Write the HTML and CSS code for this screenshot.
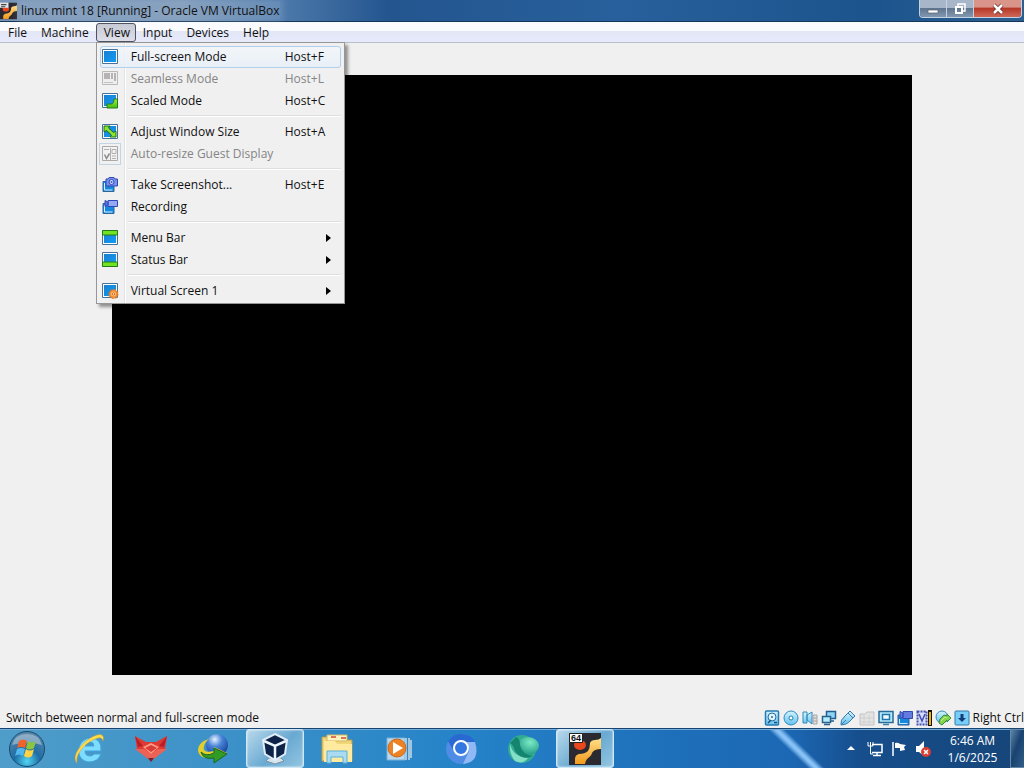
FILE: index.html
```html
<!DOCTYPE html>
<html lang="en">
<head>
<meta charset="utf-8">
<title>linux mint 18 [Running] - Oracle VM VirtualBox</title>
<link rel="stylesheet" href="styles.css">
</head>
<body>
<svg class="defs" aria-hidden="true">
  <defs>
    <linearGradient id="blue" x1="0" y1="0" x2="1" y2="1"><stop offset="0" stop-color="#1a7fd0"/><stop offset="1" stop-color="#129cf5"/></linearGradient>
    <linearGradient id="green" x1="0" y1="0" x2="0" y2="1"><stop offset="0" stop-color="#a4f03a"/><stop offset="1" stop-color="#42bd10"/></linearGradient>
    <linearGradient id="cyan" x1="0" y1="0" x2="0" y2="1"><stop offset="0" stop-color="#d4f4ff"/><stop offset="1" stop-color="#63c1f0"/></linearGradient>
    <linearGradient id="gold" x1="0" y1="0" x2="0" y2="1"><stop offset="0" stop-color="#ffe08a"/><stop offset="1" stop-color="#f39a1c"/></linearGradient>
    <radialGradient id="orb" cx=".5" cy=".85" r=".8"><stop offset="0" stop-color="#53d5f5"/><stop offset=".45" stop-color="#1d6ea6"/><stop offset="1" stop-color="#5b86a8"/></radialGradient>
    <radialGradient id="globe" cx=".4" cy=".25" r=".8"><stop offset="0" stop-color="#e4f1ff"/><stop offset=".4" stop-color="#4a86d8"/><stop offset="1" stop-color="#123d95"/></radialGradient>
    <radialGradient id="mint" cx=".6" cy=".3" r=".8"><stop offset="0" stop-color="#7cebc5"/><stop offset="1" stop-color="#148f7b"/></radialGradient>
    <symbol id="screen" viewBox="0 0 16 16"><path d="M.5.5h15v14H.5z" fill="#fff" stroke="#47739b"/><path d="M2 2h12v11H2z" fill="url(#blue)"/></symbol>
    <symbol id="vm" viewBox="0 0 32 32"><path d="M0 0h32v32H0z" fill="#2b2a31"/><path d="M6 31V26q0-4 4-5 6 0 9-3 2-3 2-8 1-3 5-3 4 0 6-2v11q-7 0-9 4c-1 5-6 4-7 11z" fill="url(#gold)"/><ellipse cx="11" cy="12" rx="6" ry="5" fill="#e9481f"/></symbol>
  </defs>
</svg>
<div class="desktop">
  <header class="titlebar">
    <svg class="title-icon" viewBox="0 0 16 16"><use href="#vm"/><path d="M0 0h8v5H0z" fill="#dfe5e9"/><path d="M1 2h5M1 4h4" stroke="#444"/></svg>
    <h1 class="title"><span class="title-glow">linux mint 18 [Running] - Oracle VM VirtualBox</span></h1>
    <div class="window-controls">
      <button class="control" aria-label="Minimize"><svg width="12" height="12" viewBox="0 0 12 12"><path d="M1 7h10v3H1z" fill="#fff" stroke="#56616e" stroke-width=".7"/></svg></button>
      <button class="control" aria-label="Restore"><svg width="12" height="12" viewBox="0 0 12 12" fill="none"><path d="M4 3V1h7v7H9" stroke="#fff" stroke-width="1.500"/><path d="M2 4h6v6H2z" stroke="#fff" stroke-width="2"/></svg></button>
      <button class="control control-close" aria-label="Close"><svg width="12" height="12" viewBox="0 0 12 12"><path d="M2 2l8 8M10 2l-8 8" stroke="#6a2b28" stroke-width="4"/><path d="M2 2l8 8M10 2l-8 8" stroke="#fff" stroke-width="2.500"/></svg></button>
    </div>
  </header>
  <nav class="menubar">
    <button class="menu-title">File</button>
    <button class="menu-title">Machine</button>
    <div class="menu-holder">
      <button class="menu-title menu-open" aria-expanded="true">View</button>
      <div class="menu" role="menu">
        <button class="item item-active" role="menuitem"><svg class="icon"><use href="#screen"/></svg><span>Full-screen Mode</span><span class="key">Host+F</span></button>
        <button class="item" role="menuitem" disabled><svg class="icon" viewBox="0 0 16 16"><path d="M.5.5h15v13H.5z" fill="#eee" stroke="#b9b9b9"/><path d="M2 2h6v6H2zM9 2h2v6H9zM12 2h2v8h-2z" fill="#b7b3b5"/><path d="M2 11.500h9" stroke="#c4c4c4"/></svg><span>Seamless Mode</span><span class="key">Host+L</span></button>
        <button class="item" role="menuitem"><svg class="icon" viewBox="0 0 16 16"><use href="#screen"/><path d="M12 6h3.500v9H5v-4h4q3 0 3-5z" fill="url(#green)" stroke="#247d1b"/></svg><span>Scaled Mode</span><span class="key">Host+C</span></button>
        <hr class="separator">
        <button class="item" role="menuitem"><svg class="icon" viewBox="0 0 16 16"><use href="#screen"/><path d="M2 2h6L6.500 4l5 4.500L14 7v6H8l1.500-2-5-4.500L2 8z" fill="#8fe32c" stroke="#176d19"/></svg><span>Adjust Window Size</span><span class="key">Host+A</span></button>
        <button class="item" role="menuitem" disabled><svg class="icon icon-checked" viewBox="0 0 16 16"><path d="M.5.5h15v14H.5z" fill="#f2f2f2" stroke="#aaa"/><path d="M8.500 2v12M10 3.500h4v4h-4zM2 3.500h5M10 10h4M10 12.500h4" fill="none" stroke="#b0b0b0"/><path d="M2.500 8.500l2 4 3-5" fill="none" stroke="#8c8c8c" stroke-width="1.500"/></svg><span>Auto-resize Guest Display</span></button>
        <hr class="separator">
        <button class="item" role="menuitem"><svg class="icon" viewBox="0 0 16 16"><path d="M1 4.500h11v10H1z" fill="#1488df" stroke="#2c659a"/><path d="M2.500 6v7h8" fill="none" stroke="#d9efff"/><path d="M4 2h2l1-1.500h5L13 2h2.500v7H4z" fill="#7690ed" stroke="#3347b5"/><circle cx="9.500" cy="5" r="2.500" fill="#cfdcff" stroke="#3448b5"/><circle cx="9.500" cy="5" r="1" fill="#4057c5"/></svg><span>Take Screenshot...</span><span class="key">Host+E</span></button>
        <button class="item" role="menuitem"><svg class="icon" viewBox="0 0 16 16"><path d="M1 4.500h11v10H1z" fill="#1488df" stroke="#2c659a"/><path d="M2.500 6v7h8" fill="none" stroke="#d9efff"/><path d="M6 1.500h9.500v6H6z" fill="#93a9f5" stroke="#3448b5"/><path d="M6 3L3 1.500v6L6 6z" fill="#5b75df" stroke="#3448b5"/></svg><span>Recording</span></button>
        <hr class="separator">
        <button class="item" role="menuitem"><svg class="icon" viewBox="0 0 16 16"><use href="#screen"/><path d="M.5.5h15V5H.5z" fill="#72e222" stroke="#247d1b"/></svg><span>Menu Bar</span><svg class="arrow" viewBox="0 0 5 8"><path d="M0 0l5 4-5 4z"/></svg></button>
        <button class="item" role="menuitem"><svg class="icon" viewBox="0 0 16 16"><use href="#screen"/><path d="M.5 10h15v4.500H.5z" fill="#72e222" stroke="#247d1b"/></svg><span>Status Bar</span><svg class="arrow" viewBox="0 0 5 8"><path d="M0 0l5 4-5 4z"/></svg></button>
        <hr class="separator">
        <button class="item" role="menuitem"><svg class="icon" viewBox="0 0 16 16"><use href="#screen"/><circle cx="11.500" cy="11" r="3.500" fill="#ffc277" stroke="#f08a2c" stroke-width="2"/><circle cx="11.500" cy="11" r="4.500" fill="none" stroke="#e0741c" stroke-dasharray="1.800 1.700"/><circle cx="11.500" cy="11" r="1.200" fill="#fff" stroke="#df6613"/></svg><span>Virtual Screen 1</span><svg class="arrow" viewBox="0 0 5 8"><path d="M0 0l5 4-5 4z"/></svg></button>
      </div>
    </div>
    <button class="menu-title">Input</button>
    <button class="menu-title">Devices</button>
    <button class="menu-title">Help</button>
  </nav>
  <main class="workspace"><div class="guest-screen"></div></main>
  <div class="statusbar">
    <span class="hint">Switch between normal and full-screen mode</span>
    <div class="indicators">
      <svg class="icon" viewBox="0 0 16 16"><rect x="1.500" y="1" width="13" height="14" rx="1" fill="url(#cyan)" stroke="#257bb1" stroke-width="1.500"/><circle cx="8" cy="7" r="4" fill="#dff6ff" stroke="#236ca1"/><circle cx="8" cy="7" r="1" fill="#246c9e"/><path d="M4 13l3-3M10 12.500h3" stroke="#174f79" stroke-width="1.500"/></svg>
      <svg class="icon" viewBox="0 0 16 16"><circle cx="8" cy="8" r="7" fill="url(#cyan)" stroke="#318bbd"/><circle cx="8" cy="8" r="2" fill="#fff" stroke="#277eb1"/></svg>
      <svg class="icon" viewBox="0 0 16 16"><path d="M1 2h4v11H1zM5 5l5-3v12l-5-4z" fill="url(#cyan)" stroke="#318bbd"/><path d="M11 5h4v9h-4zM11 8h4M11 11h4" fill="#ddd" stroke="#a8a5a5"/></svg>
      <svg class="icon" viewBox="0 0 16 16"><path d="M5.500 1.500h9v7h-9zM8 11h5" fill="#8ed5f5" stroke="#235d91" stroke-width="1.500"/><path d="M1.500 6.500h8v6h-8zM3 14.500h6" fill="#b4edff" stroke="#28608c" stroke-width="1.500"/></svg>
      <svg class="icon" viewBox="0 0 16 16"><path d="M1 15q-1-5 4-9l5-5 5 5-6 6q-3 3-8 3z" fill="url(#cyan)" stroke="#397ba8"/><path d="M8 3l5 5M2 14l4-4" stroke="#437ca0"/></svg>
      <svg class="icon" viewBox="0 0 16 16"><path d="M1 4h5l2-2h7v13H1z" fill="#e3e3e3" stroke="#c3c3c3"/><path d="M1 8h14M1 12h14M5 5v9M10 5v9" stroke="#d0d0d0"/></svg>
      <svg class="icon" viewBox="0 0 16 16"><path d="M1 1.500h14v11H1z" fill="#b4eaff" stroke="#286a99" stroke-width="1.500"/><path d="M4.500 4.500h7v5h-7z" fill="#effcff" stroke="#2375a8" stroke-width="1.500"/><path d="M5 14.500h6" stroke="#3f7fa7" stroke-width="1.500"/></svg>
      <svg class="icon" viewBox="0 0 16 16"><path d="M1 5h11v10H1z" fill="#1689dc" stroke="#315c9a"/><path d="M6 1.500h9.500v7H6zM6 3L3 1.500v7L6 7z" fill="#637cdf" stroke="#324ab1"/><path d="M2.500 9v4.500h8" fill="none" stroke="#c8eaff"/></svg>
      <svg class="icon" viewBox="0 0 16 16"><path d="M1.500 1.500h9v13h-9z" fill="#d8ddff" stroke="#4250a9" stroke-width="2" stroke-dasharray="2 1"/><path d="M3 4l3 7 3-7" fill="none" stroke="#4650ad" stroke-width="1.500"/><path d="M12 0h4v16h-4z" fill="#171300"/><path d="M13 2h2v13h-2z" fill="#e3b51b"/></svg>
      <svg class="icon" viewBox="0 0 16 16"><circle cx="7" cy="7" r="6" fill="url(#cyan)" stroke="#398db6"/><path d="M5 9l4-4 3 1V4l4 4-4 4v-2l-5 5-3-2z" fill="#83d44a" stroke="#318b41"/><path d="M6 11l4-4 2 1" fill="none" stroke="#c4f09b"/></svg>
      <svg class="icon" viewBox="0 0 16 16"><rect x="1" y="1" width="14" height="14" rx="1" fill="#77cef9" stroke="#347ba8"/><path d="M6.500 4h3v4H12l-4 4-4-4h2.500z" fill="#133b78"/></svg>
      <span>Right Ctrl</span>
    </div>
  </div>
  <footer class="taskbar">
    <button class="start" aria-label="Start"><svg width="38" height="38" viewBox="0 0 38 38"><circle cx="19" cy="19" r="17.500" fill="url(#orb)" stroke="#174b72"/><path d="M4 15q3-11 15-11t15 11q-15-5-30 0z" fill="#fff" opacity=".35"/><path d="M11 11q4-3 8 0l-2 7q-4-2-8 0z" fill="#ef622c"/><path d="M20 11q4 3 8 0l-2 7q-4 3-8 0z" fill="#8cc63e"/><path d="M9 19q4-2 8 0l-2 7q-4-3-8 0z" fill="#52b7ee"/><path d="M18 19q4 3 8 0l-2 7q-4 3-8 0z" fill="#ffd343"/></svg></button>
    <div class="tasks">
      <button class="task" aria-label="Internet Explorer"><svg class="app" viewBox="0 0 32 32"><path d="M28 18H12q0 5 5 5 3 0 4-2h7q-3 8-12 8C2 28 2 7 17 5q12 0 11 13M12 13h9q0-4-4-4t-5 4z" fill="#7edcff" stroke="#3fa4dc" fill-rule="evenodd"/><path d="M4 30C-3 23 11 6 24 2q8-2 6 6-1-4-5-3C14 8 2 20 4 30z" fill="#ffdc4e" stroke="#d69c1f" stroke-width=".5"/></svg></button>
      <button class="task" aria-label="Fox"><svg class="app" viewBox="0 0 32 32"><path d="M0 3l11 6h10l11-6-2 13-14 12L2 16z" fill="#df3a32"/><path d="M0 3l8 10-5 1zM32 3l-8 10 5 1z" fill="#b91f2a"/><path d="M0 16h9l7 5 7-5h9L16 28z" fill="#ed6256"/><path d="M8 14l8-4 8 4-8 7z" fill="#ff9b85"/><path d="M10 15l6-3 6 3-6 4z" fill="#d93b37"/><path d="M13 25h6l-3 4z" fill="#742331"/></svg></button>
      <button class="task" aria-label="Download Manager"><svg class="app" viewBox="0 0 32 32"><circle cx="20" cy="12" r="11" fill="url(#globe)"/><path d="M13 6C-1 8-3 23 9 25l8-1v5l13-9-13-6v4q-12 3-10-5 1-4 6-8z" fill="#e4ce29"/><path d="M4 19q5 5 13 1v-5l13 6-13 9v-5Q6 27 4 19z" fill="#329b25" stroke="#176923"/></svg></button>
      <button class="task task-running" aria-label="VirtualBox"><svg class="app" viewBox="0 0 32 32"><path d="M10 25h12l3 3-9 3-9-3z" fill="#d5e3ed" stroke="#7891a5"/><path d="M16 1l12 6-2 14-10 6-10-6L4 7z" fill="#0d2347" stroke="#dfedf9" stroke-width="2"/><path d="M5 8l11 5 11-5M16 13v13" fill="none" stroke="#ecf7ff" stroke-width="2.500"/></svg></button>
      <button class="task" aria-label="File Explorer"><svg class="app" viewBox="0 0 32 32"><path d="M1 4h9l2 3h19v21H1z" fill="#f0d679" stroke="#b49b4d"/><path d="M6 2h20v6H6z" fill="#fff3bd" stroke="#d1b760"/><path d="M10 4h5M20 5h5" stroke="#d24a39" stroke-width="1.500"/><path d="M3 8h11l2 3h15v18H3z" fill="#ffeaa0"/><path d="M6 30V18h20v12h-4v-6H10v6z" fill="#a9dcf3" stroke="#5aafd7"/></svg></button>
      <button class="task" aria-label="Media Player"><svg class="app" viewBox="0 0 32 32"><path d="M4 5h18v22H4z" fill="#b9d8eb" stroke="#77b1d8"/><path d="M23 5v22M26 5v22M28 7v18" stroke="#c8ddea" stroke-width="1.500"/><circle cx="14" cy="15" r="9" fill="#ed8223" stroke="#c76822"/><path d="M10 9v12l10-6z" fill="#fff"/></svg></button>
      <button class="task" aria-label="Chromium"><svg class="app" viewBox="0 0 32 32"><circle cx="16" cy="16" r="15" fill="#4f8ce6"/><path d="M3 8Q9 0 16 1q10 0 14 8H16q-6 1-7 9z" fill="#2869d2"/><path d="M18 31l6-13q1-5-3-9h9q6 20-12 22z" fill="#8fb8f5"/><circle cx="16" cy="15" r="7" fill="#3278e0" stroke="#fff" stroke-width="2"/></svg></button>
      <button class="task" aria-label="Browser"><svg class="app" viewBox="0 0 32 32"><circle cx="15" cy="16" r="14" fill="#30ac92"/><path d="M3 11q3 13 18 14-5 7-13 3-6-7-5-17z" fill="#85dfc7"/><ellipse cx="21" cy="13" rx="11" ry="9" fill="url(#mint)"/><path d="M9 4q4 1 4 8 2 10 13 11-11 5-18-5Q6 11 3 10z" fill="#15846e"/></svg></button>
      <button class="task task-running" aria-label="linux mint 18"><svg class="app" viewBox="0 0 32 32"><use href="#vm"/><path d="M.5.5h13v9H.5z" fill="#fff" stroke="#222"/><text class="badge" x="2" y="8">64</text></svg></button>
    </div>
    <div class="tray">
      <button class="tray-button" aria-label="Show hidden icons"><svg width="8" height="5" viewBox="0 0 8 5"><path d="M4 0l4 4H0z" fill="#fff"/></svg></button>
      <button class="tray-button" aria-label="Network"><svg class="icon" viewBox="0 0 16 16"><path d="M5 3.500h10v8H5M10 12v2M6 14.500h8" fill="none" stroke="#fff" stroke-width="1.500"/><path d="M1 1v4h5V1M3.500 1v12H6" fill="none" stroke="#fff"/></svg></button>
      <button class="tray-button" aria-label="Action Center"><svg class="icon" viewBox="0 0 16 16"><path d="M2 1v14" stroke="#fff" stroke-width="1.500"/><path d="M4 2q3-1 5 1l6 1-2 2 1 3-5 1V7H4z" fill="#fff"/></svg></button>
      <button class="tray-button" aria-label="Volume muted"><svg class="icon" viewBox="0 0 16 16"><path d="M1 5h3l5-5v15l-5-4H1z" fill="#fff"/><circle cx="11" cy="11" r="5" fill="#d83d32"/><path d="M9 9l4 4M13 9l-4 4" stroke="#fff" stroke-width="1.500"/></svg></button>
      <div class="clock"><time>6:46 AM</time><span>1/6/2025</span></div>
      <button class="show-desktop" aria-label="Show desktop"></button>
    </div>
  </footer>
</div>
</body>
</html>
```
FILE: styles.css
```css
* { box-sizing: border-box; }
body { margin: 0; font: 12px/16px "Segoe UI", "Open Sans", sans-serif; color: #111; }
button { margin: 0; padding: 0; border: 0; background: none; font: inherit; color: inherit; }
svg { display: block; flex: none; }
.defs { position: absolute; width: 0; height: 0; }
.icon { width: 16px; height: 16px; overflow: visible; }
.desktop { display: flex; flex-direction: column; height: 100vh; background: #f0f0f0; }

.titlebar { display: flex; align-items: center; gap: 4px; flex: none; height: 22px; padding-right: 2px; border-bottom: 1px solid #143657; background: linear-gradient(90deg, #7895b8 0%, #7b98b9 18%, #4f7bac 27%, #24558f 38%, #27609c 60%, #1c548d 85%, #2b5f91 100%); }
.title-icon { width: 17px; height: 18px; }
.title { flex: 1; margin: 0; font-size: 12px; font-weight: 400; }
.title-glow { background: #a9bdd344; box-shadow: 0 0 6px 3px #a9bdd344; }
.window-controls { display: flex; align-self: flex-start; height: 18px; border: 1px solid #c4d2df; border-top: 0; border-radius: 0 0 4px 4px; overflow: hidden; }
.control { display: flex; align-items: center; justify-content: center; width: 27px; border-right: 1px solid #c4d2df; background: linear-gradient(#a7b6c8 45%, #60758f 50%, #8298b0); }
.control-close { width: 47px; border-right: 0; background: linear-gradient(#d9958a 40%, #b83927 50%, #ce6859); }

.menubar { display: flex; flex: none; height: 21px; padding-left: 1px; border-top: 1px solid #f7faff; border-bottom: 1px solid #b8bfcd; background: linear-gradient(#fafbff 40%, #e2e6f5 45%, #e7eafa); }
.menu-title { height: 19px; padding: 0 7px; }
.menu-holder { position: relative; }
.menu-open { width: 40px; border: 1px solid #4f5260; border-radius: 3px; background: linear-gradient(#c7c9d4, #dedfe9); }
.menu { position: absolute; z-index: 2; top: 19px; left: 0; width: 249px; padding: 3px 3px 1px; border: 1px solid #979797; background: linear-gradient(90deg, #f1f1f1 27px, #dfe3e5 27px, #dfe3e5 28px, #fff 28px, #fff 29px, #f0f0f0 29px); box-shadow: 3px 3px 3px #0006; }
.item { display: grid; grid-template-columns: 16px 1fr 54px; column-gap: 13px; align-items: center; width: 100%; height: 22px; padding: 0 1px; border: 1px solid transparent; border-radius: 3px; text-align: left; white-space: nowrap; }
.item-active { border-color: #afcfeb; background: linear-gradient(#f3f7fbcc, #e6eff8cc); }
.item:disabled { color: #858585; }
.arrow { width: 5px; height: 8px; justify-self: end; margin-right: 8px; }
.icon-checked { outline: 1px solid #c3d4e5; outline-offset: 2px; }
.separator { height: 2px; margin: 3px 0 4px 28px; border: 0; border-top: 1px solid #dedede; border-bottom: 1px solid #fff; }

.workspace { display: flex; justify-content: center; flex: 1; min-height: 0; padding: 32px 0 33px; }
.guest-screen { height: 100%; max-width: 100%; aspect-ratio: 4 / 3; background: #000; }
.statusbar { display: flex; align-items: center; justify-content: space-between; flex: none; height: 20px; padding-left: 6px; white-space: nowrap; }
.indicators { display: flex; align-items: center; gap: 3px; }

.taskbar { display: flex; flex: none; height: 40px; border-top: 1px solid #164474; box-shadow: inset 0 1px #74abd4; background: linear-gradient(44deg, #7ab8f000 43%, #7ab8f0 48%, #8fc5f6 50%, #7ab8f0 52%, #7ab8f000 57%) calc(100% - 188px) 0 / 80px 100% no-repeat, linear-gradient(90deg, #4f9dc9 0%, #3990c8 25%, #2583c8 45%, #1e70bb 65%, #1c68b5 77%, #164e8c 84%, #164578 100%); }
.start { display: flex; align-items: center; justify-content: center; width: 54px; margin-right: 6px; }
.tasks { display: flex; gap: 4px; }
.task { display: flex; align-items: center; justify-content: center; width: 58px; border: 1px solid transparent; border-radius: 3px; }
.task-running { border-color: #d0e7f5; background: linear-gradient(135deg, #b9d9ec, #69a9d1 55%, #94c6e2); box-shadow: inset 0 0 2px #fff; }
.app { width: 32px; height: 32px; overflow: visible; }
.badge { font: bold 9px "Liberation Sans", sans-serif; fill: #111; }
.tray { display: flex; align-items: center; margin-left: auto; color: #fff; }
.tray-button { display: flex; align-items: center; justify-content: center; width: 24px; height: 24px; }
.clock { display: flex; flex-direction: column; align-items: center; justify-content: center; width: 75px; line-height: 17px; }
.show-desktop { align-self: stretch; width: 14px; border: 1px solid #6487a6; border-right: 0; background: linear-gradient(110deg, #5b85a8, #194270 45%, #315e87); }
```
